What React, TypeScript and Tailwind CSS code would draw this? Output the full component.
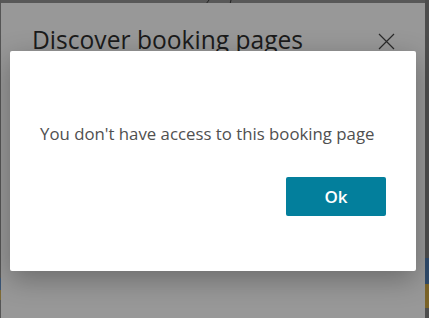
export default function App() {
  return (
    <div
      className="relative w-[429px] h-[318px] overflow-hidden bg-[#585858]"
      style={{ fontFamily: '"Open Sans", "Noto Sans", sans-serif' }}
    >
      {/* right edge strip with underlying page colours */}
      <div className="absolute right-0 top-0 w-[4px] h-full flex flex-col">
        <div className="h-[258px] bg-[#4d4d4d]" />
        <div className="h-[26px] bg-[#2f4a6a]" />
        <div className="h-[24px] bg-[#7a6328]" />
        <div className="flex-1 bg-[#4d4d4d]" />
      </div>
      <div className="absolute left-0 top-0 w-[1px] h-full flex flex-col">
        <div className="h-[278px] bg-[#555]" />
        <div className="h-[12px] bg-[#3a5576]" />
        <div className="h-[10px] bg-[#7d6a35]" />
        <div className="flex-1 bg-[#555]" />
      </div>
      {/* underlying page mark at top */}
      <svg className="absolute left-[200px] top-0" width="40" height="4" viewBox="0 0 40 4">
        <path d="M6 4 L9 0" stroke="#222" strokeWidth="1" fill="none" />
        <path d="M30 4 L31 0" stroke="#222" strokeWidth="1" fill="none" />
      </svg>

      {/* outer (dimmed) dialog */}
      <div className="absolute left-[1px] top-[3px] w-[424px] h-[318px] bg-[#989898]">
        <div className="flex items-start justify-between pl-[31px] pr-[30px] pt-[20px]">
          <h1 className="text-[24.6px] leading-[34px] text-[#1b1b1b]">
            Discover booking pages
          </h1>
          <svg className="mt-[10px]" width="17" height="17" viewBox="0 0 17 17">
            <path d="M1 1 L16 16 M16 1 L1 16" stroke="#2a2a2a" strokeWidth="1.2" />
          </svg>
        </div>
      </div>

      {/* inner white alert dialog */}
      <div className="absolute left-[10px] top-[51px] w-[406px] h-[220px] bg-white rounded-[2px] shadow-[0_8px_28px_rgba(0,0,0,0.3)] flex flex-col">
        <p className="mt-[71px] ml-[30px] text-[16.8px] leading-[24px] text-[#505050]">
          You don't have access to this booking page
        </p>
        <div className="flex justify-end pr-[30px] mt-[31px]">
          <button className="w-[100px] h-[39px] bg-[#037f9c] rounded-[2px] text-white text-[17px] font-semibold">
            Ok
          </button>
        </div>
      </div>
    </div>
  );
}
